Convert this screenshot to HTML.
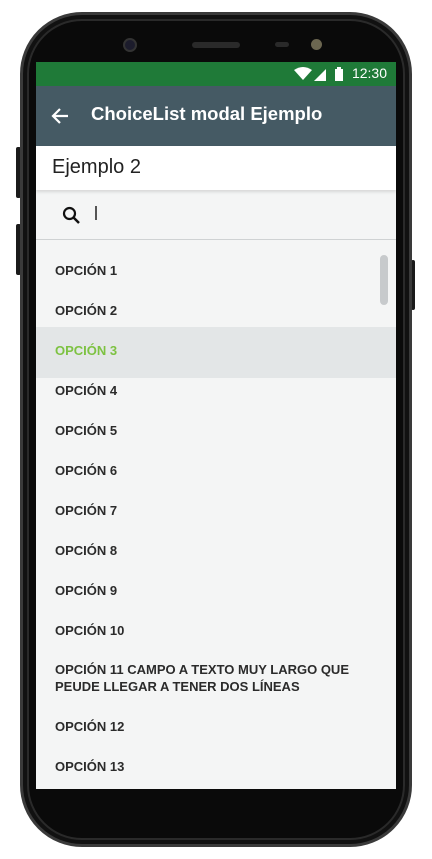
<!DOCTYPE html>
<html><head><meta charset="utf-8"><style>
*{margin:0;padding:0;box-sizing:border-box}
body{width:432px;height:859px;background:#fff;position:relative;overflow:hidden;font-family:"Liberation Sans",sans-serif}
.phone{position:absolute;left:20px;top:12px;width:392px;height:835px;background:#0a0a0a;border-radius:62px;border:3px solid #3a3a3a;box-shadow:inset 0 0 0 4px #111,inset 0 0 0 6px #2a2a2a}
.btn{position:absolute;background:#1a1a1a;border-radius:2px}
.screen{position:absolute;left:36px;top:62px;width:360px;height:727px;background:#f4f5f5;overflow:hidden}
.status{height:24px;background:#1f7a38;color:#fff;font-size:14px;position:relative}
.status .t{position:absolute;right:9px;top:3px}
.bar{height:60px;background:#455a64;color:#fff;position:relative}
.bar .title{position:absolute;left:55px;top:17px;font-size:18.5px;font-weight:bold;letter-spacing:0}
.hdr{height:44px;background:#fff;position:relative;box-shadow:0 2px 3px rgba(0,0,0,.12)}
.hdr span{position:absolute;left:16px;top:10px;font-size:20px;color:#222}
.search{height:50px;border-bottom:1px solid #cfd2d3;position:relative}
.item{position:absolute;left:19px;font-size:13px;font-weight:bold;color:#2b2b2b;line-height:17px}
.sel{position:absolute;left:0;top:137px;width:360px;height:51px;background:#e3e6e7}
</style></head><body>
<div class="btn" style="left:16px;top:147px;width:5px;height:51px"></div>
<div class="btn" style="left:16px;top:224px;width:5px;height:51px"></div>
<div class="btn" style="left:411px;top:260px;width:4px;height:50px"></div>
<div class="phone"></div>
<div style="position:absolute;left:123px;top:38px;width:14px;height:14px;border-radius:50%;background:#1c1c2c;border:2px solid #333"></div>
<div style="position:absolute;left:192px;top:42px;width:48px;height:6px;border-radius:3px;background:#2a2a2a"></div>
<div style="position:absolute;left:275px;top:42px;width:14px;height:5px;border-radius:3px;background:#2a2a2a"></div>
<div style="position:absolute;left:311px;top:39px;width:11px;height:11px;border-radius:50%;background:#6b6650"></div>
<div class="screen">
 <div class="status">
  <svg style="position:absolute;left:258px;top:5px" width="50" height="15" viewBox="0 0 50 15">
   <path d="M0 3 Q9 -3 18 3 L9 13 Z" fill="#fff"/>
   <path d="M20 14 L32 2 L32 14 Z" fill="#fff"/>
   <rect x="41" y="2" width="8" height="12" fill="#fff"/><rect x="43" y="0" width="4" height="2" fill="#fff"/>
  </svg>
  <span class="t">12:30</span>
 </div>
 <div class="bar">
  <svg style="position:absolute;left:15px;top:21px" width="18" height="18" viewBox="0 0 18 18"><path d="M17 9H2M9 2L2 9l7 7" stroke="#fff" stroke-width="2.2" fill="none"/></svg>
  <span class="title">ChoiceList modal Ejemplo</span>
 </div>
 <div class="hdr"><span>Ejemplo 2</span></div>
 <div style="position:relative;height:599px">
  <div class="search">
   <svg style="position:absolute;left:26px;top:16px" width="19" height="19" viewBox="0 0 19 19"><circle cx="7.5" cy="7.5" r="5.5" stroke="#111" stroke-width="2.2" fill="none"/><path d="M11.5 11.5L17 17" stroke="#111" stroke-width="2.5"/></svg>
   <div style="position:absolute;left:59px;top:16px;width:1.5px;height:14px;background:#555"></div>
  </div>
  <div class="sel"></div>
  <div style="position:absolute;left:344px;top:65px;width:8px;height:50px;border-radius:4px;background:#c7cacc"></div>
 </div>
 <div class="item" style="top:200px">OPCIÓN 1</div>
 <div class="item" style="top:240px">OPCIÓN 2</div>
 <div class="item" style="top:280px;color:#7dc242">OPCIÓN 3</div>
 <div class="item" style="top:320px">OPCIÓN 4</div>
 <div class="item" style="top:360px">OPCIÓN 5</div>
 <div class="item" style="top:400px">OPCIÓN 6</div>
 <div class="item" style="top:440px">OPCIÓN 7</div>
 <div class="item" style="top:480px">OPCIÓN 8</div>
 <div class="item" style="top:520px">OPCIÓN 9</div>
 <div class="item" style="top:560px">OPCIÓN 10</div>
 <div class="item" style="top:599px;line-height:17px">OPCIÓN 11 CAMPO A TEXTO MUY LARGO QUE<br>PEUDE LLEGAR A TENER DOS LÍNEAS</div>
 <div class="item" style="top:656px">OPCIÓN 12</div>
 <div class="item" style="top:696px">OPCIÓN 13</div>
</div>
</body></html>
